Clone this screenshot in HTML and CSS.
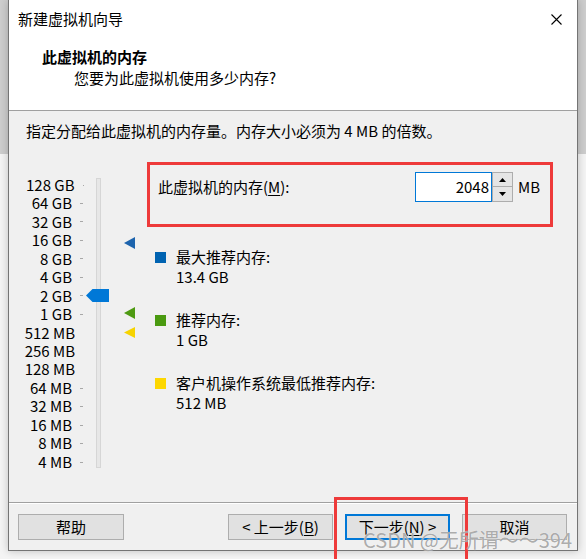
FILE: index.html
```html
<!DOCTYPE html>
<html lang="zh-CN">
<head>
<meta charset="UTF-8">
<title>新建虚拟机向导</title>
<link rel="stylesheet" href="styles.css">
</head>
<body>

<div class="window">
    <div class="titlebar">
        <span>新建虚拟机向导</span>
        <svg class="close" width="11" height="11" viewBox="0 0 11 11">
            <path d="M0.5 0.5 L10.5 10.5 M10.5 0.5 L0.5 10.5" stroke="#000" stroke-width="1.1" fill="none"/>
        </svg>
    </div>

    <!-- Wizard step header -->
    <div class="header">
        <h1>此虚拟机的内存</h1>
        <p>您要为此虚拟机使用多少内存?</p>
    </div>

    <div class="content">
        <p class="hint">指定分配给此虚拟机的内存量。内存大小必须为 4 MB 的倍数。</p>

        <div class="main">
            <!-- Memory slider -->
            <div class="scale">
                <ul class="labels">
                    <li>128 GB</li>
                    <li>64 GB</li>
                    <li>32 GB</li>
                    <li>16 GB</li>
                    <li>8 GB</li>
                    <li>4 GB</li>
                    <li>2 GB</li>
                    <li>1 GB</li>
                    <li>512 MB</li>
                    <li>256 MB</li>
                    <li>128 MB</li>
                    <li>64 MB</li>
                    <li>32 MB</li>
                    <li>16 MB</li>
                    <li>8 MB</li>
                    <li>4 MB</li>
                </ul>
                <div class="track">
                    <svg class="thumb" width="23" height="13" viewBox="0 0 23 13">
                        <polygon points="0,6.5 6.5,0 23,0 23,13 6.5,13" fill="#0078d7"/>
                    </svg>
                </div>
                <div class="markers">
                    <svg class="marker max" width="11" height="12" viewBox="0 0 11 12">
                        <polygon points="0,6 11,0 11,12" fill="#1d64ad"/>
                    </svg>
                    <svg class="marker rec" width="11" height="12" viewBox="0 0 11 12">
                        <polygon points="0,6 11,0 11,12" fill="#4e9a12"/>
                    </svg>
                    <svg class="marker min" width="11" height="11" viewBox="0 0 11 11">
                        <polygon points="0,5.5 11,0 11,11" fill="#f6d300"/>
                    </svg>
                </div>
            </div>

            <div class="settings">
                <div class="mem-box">
                    <div class="mem-row">
                        <label class="mem-label">此虚拟机的内存(<u>M</u>):</label>
                        <div class="num">2048</div>
                        <div class="spin">
                            <div class="spin-btn">
                                <svg width="7" height="4" viewBox="0 0 7 4"><polygon points="0,4 3.5,0 7,4" fill="#000"/></svg>
                            </div>
                            <div class="spin-btn">
                                <svg width="7" height="4" viewBox="0 0 7 4"><polygon points="0,0 7,0 3.5,4" fill="#000"/></svg>
                            </div>
                        </div>
                        <span class="unit">MB</span>
                    </div>
                </div>

                <ul class="legend">
                    <li>
                        <span class="swatch blue"></span>
                        <div>最大推荐内存:<br>13.4 GB</div>
                    </li>
                    <li>
                        <span class="swatch green"></span>
                        <div>推荐内存:<br>1 GB</div>
                    </li>
                    <li>
                        <span class="swatch yellow"></span>
                        <div>客户机操作系统最低推荐内存:<br>512 MB</div>
                    </li>
                </ul>
            </div>
        </div>
    </div>

    <div class="footer">
        <button class="btn">帮助</button>
        <div class="nav">
            <button class="btn">&lt; 上一步(<u>B</u>)</button>
            <button class="btn primary">下一步(<u>N</u>) &gt;</button>
            <button class="btn">取消</button>
        </div>
    </div>

    <!-- annotation + watermark on top of the screenshot -->
    <div class="mark-next"></div>
    <div class="watermark">CSDN @无所谓～～394</div>
</div>

</body>
</html>
```

FILE: styles.css
```css
:root {
    --font: "Noto Sans CJK SC", "Noto Sans", sans-serif;
    --face: #f0f0f0;
    --line: #a0a0a0;
    --red: #ee3a3a;
    --blue: #0078d7;
}

* {
    margin: 0; padding: 0;
    box-sizing: border-box;
}

html, body {
    overflow: hidden;
}

body {
    background: linear-gradient(#cdcdcd 0 154px, #f4f4f4 154px);
    font-family: var(--font);
    font-size: 15px;
    color: #000;
    height: 559px;
}

ul {
    list-style: none;
}

.window {
    position: relative;
    margin-left: 8px;
    width: 570px;
    height: 551px;
    border: 1px solid #747474;
    border-top: none;
    background: var(--face);
    display: flex;
    flex-direction: column;
    box-shadow: 0 0 8px rgba(0, 0, 0, 0.22);
}

.titlebar {
    height: 38px;
    background: #fff;
    display: flex;
    align-items: center;
    justify-content: space-between;
    padding: 0 15px 0 9px;
    line-height: 20px;
}

.header {
    height: 73px;
    background: #fff;
    border-bottom: 1px solid var(--line);
    padding: 9px 0 0 33px;
    line-height: 20px;
}

.header h1 {
    font-size: 15px;
    font-weight: 700;
}

.header p {
    margin: 1px 0 0 32px;
}

.content {
    flex: 1;
    padding: 10px 0 0 17px;
    line-height: 20px;
}

.main {
    display: flex;
    margin-top: 21px;
}

/* slider */
.scale {
    display: flex;
}

.labels {
    margin-top: 13.8px;
    width: 57px;
}

.labels li {
    height: 18.47px;
    line-height: 18.47px;
    display: flex;
    justify-content: flex-end;
    align-items: center;
    white-space: nowrap;
}

.labels li::after {
    content: "";
    width: 3px;
    height: 1px;
    background: #a8a8a8;
    margin-left: 8px;
}

.track {
    position: relative;
    margin: 16px 0 0 13px;
    width: 5px;
    height: 290px;
    background: #e7e7e7;
    border: 1px solid #d6d6d6;
}

.thumb {
    position: absolute;
    left: -11px;
    top: 110px;
}

.markers {
    position: relative;
    width: 11px;
    margin-left: 23px;
}

.marker {
    position: absolute;
    left: 0;
}

.marker.max { top: 75px; }
.marker.rec { top: 145px; }
.marker.min { top: 165px; }

/* memory field */
.settings {
    margin-left: 12px;
    width: 406px;
}

.mem-box {
    height: 65px;
    border: 3px solid var(--red);
    padding: 7px 0 0 8px;
}

.mem-row {
    display: flex;
    align-items: center;
    height: 30px;
}

.mem-label {
    flex: 1;
}

.mem-label u, .btn u {
    text-underline-offset: 2px;
}

.num {
    width: 77px;
    height: 30px;
    border: 1px solid var(--blue);
    background: #fff;
    text-align: right;
    padding-right: 2px;
    line-height: 27px;
}

.spin {
    width: 21px;
    height: 30px;
    display: flex;
    flex-direction: column;
}

.spin-btn {
    height: 15px;
    background: #e5e5e5;
    border: 1px solid #adadad;
    display: flex;
    align-items: center;
    justify-content: center;
}

.spin-btn + .spin-btn {
    border-top: none;
}

.unit {
    width: 32px;
    margin-left: 5px;
}

/* legend */
.legend {
    margin: 20px 0 0 8px;
}

.legend li {
    display: flex;
    gap: 10px;
}

.legend li + li {
    margin-top: 23px;
}

.swatch {
    width: 11px;
    height: 11px;
    margin-top: 5px;
    flex-shrink: 0;
}

.swatch.blue { background: #0063b1; }
.swatch.green { background: #4a9a10; }
.swatch.yellow { background: #fdd700; }

/* footer buttons */
.footer {
    height: 48px;
    border-top: 1px solid var(--line);
    box-shadow: inset 0 1px 0 #fff;
    display: flex;
    justify-content: space-between;
    align-items: flex-start;
    padding: 11px 10px 0 9px;
}

.nav {
    display: flex;
    gap: 12px;
}

.btn {
    width: 105px;
    height: 26px;
    font-family: var(--font);
    font-size: 15px;
    line-height: 20px;
    color: #000;
    background: #e1e1e1;
    border: 1px solid #adadad;
}

.footer > .btn {
    width: 106px;
}

.btn.primary {
    border: 2px solid var(--blue);
}

.mark-next {
    position: absolute;
    left: 325px;
    top: 497px;
    width: 134px;
    height: 70px;
    border: 3px solid var(--red);
}

.watermark {
    position: absolute;
    left: 354px;
    top: 528px;
    font-size: 20px;
    line-height: 24px;
    color: rgba(118, 118, 118, 0.62);
    text-shadow: 0 0 1px #fff;
    white-space: nowrap;
}
```
